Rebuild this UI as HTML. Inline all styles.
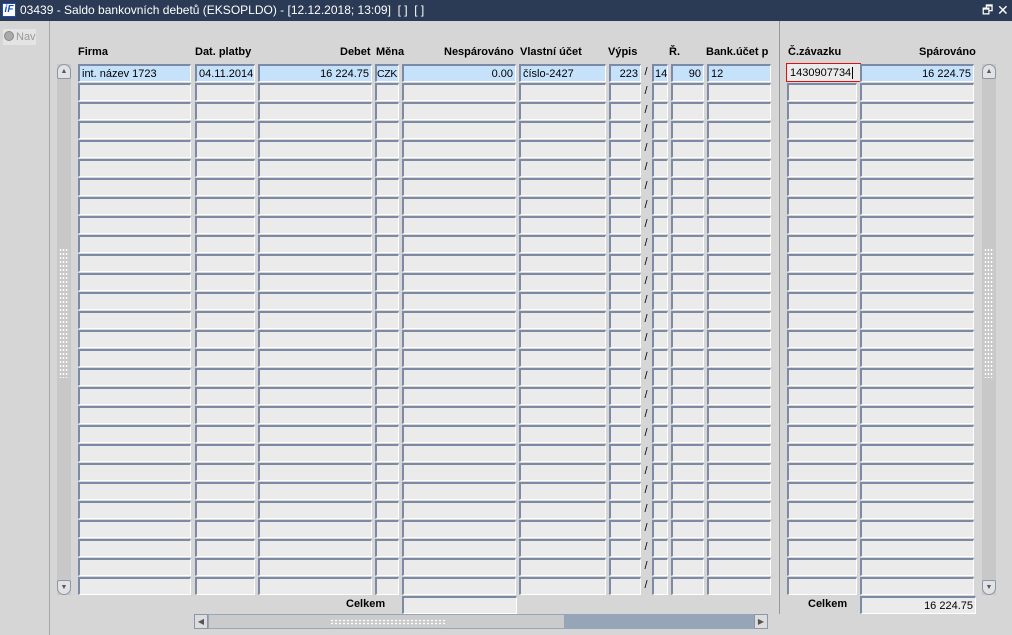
<!DOCTYPE html>
<html><head><meta charset="utf-8"><style>
body{margin:0;width:1012px;height:635px;background:#d6d6d6;font-family:"Liberation Sans",Arial,sans-serif;font-size:11px;position:relative;overflow:hidden}
.t{position:absolute;left:0;top:0;width:1012px;height:21px;background:#2b3a55;color:#fff;font-size:12px;line-height:21px}
.a{position:absolute}
.f{position:absolute;height:15px;background:#ebebeb;border-top:2px solid #7c8aa5;border-left:2px solid #7c8aa5;border-right:1px solid #fff;border-bottom:1px solid #fff;box-sizing:content-box;line-height:16px;white-space:nowrap;overflow:hidden;color:#000}
.s{background:#c6e2fb}
.r{text-align:right;padding-right:2px}
.h{position:absolute;top:46px;font-weight:bold;font-size:11px}
.sl{position:absolute;width:8px;text-align:center;font-size:11px}
</style></head><body>
<div class="t"><span style="position:absolute;left:2px;top:3px;width:14px;height:14px;background:#fff;border:1px solid #1a4cc0;box-sizing:border-box;color:#1a4cc0;font-weight:bold;font-style:italic;font-size:10px;line-height:12px;text-align:center">iF</span><span style="position:absolute;left:20px">03439 - Saldo bankovních debetů (EKSOPLDO) - [12.12.2018; 13:09]&nbsp; [ ]&nbsp; [ ]</span><span style="position:absolute;left:982px;font-size:12px">🗗</span><span style="position:absolute;left:997px;font-size:14px">✕</span></div>
<div class="a" style="left:49px;top:21px;width:1px;height:614px;background:#a8a8a8"></div>
<div class="a" style="left:3px;top:29px;width:33px;height:16px;background:#e4e4e4;color:#999;font-size:11px;line-height:16px"><span style="display:inline-block;width:8px;height:8px;border-radius:50%;background:#aaa;border:1px solid #888;vertical-align:-1px;margin:0 2px 0 1px"></span>Nav</div>
<div class="a" style="left:779px;top:21px;width:1px;height:593px;background:#999"></div>
<div class="h" style="left:78px">Firma</div>
<div class="h" style="left:195px">Dat. platby</div>
<div class="h" style="left:340px">Debet</div>
<div class="h" style="left:376px">Měna</div>
<div class="h" style="left:444px">Nespárováno</div>
<div class="h" style="left:520px">Vlastní účet</div>
<div class="h" style="left:608px">Výpis</div>
<div class="h" style="left:669px">Ř.</div>
<div class="h" style="left:706px">Bank.účet p</div>
<div class="h" style="left:788px">Č.závazku</div>
<div class="h" style="left:919px">Spárováno</div>
<div id="g"></div>
<div class="a" style="left:346px;top:598px;font-weight:bold">Celkem</div>
<div class="f" style="left:402px;top:596px;width:112px"></div>
<div class="a" style="left:808px;top:598px;font-weight:bold">Celkem</div>
<div class="f r" style="left:860px;top:596px;width:111px">16 224.75</div>
<div class="a" style="left:194px;top:614px;width:574px;height:15px;background:#97a5b8"></div>
<div class="a" style="left:209px;top:615px;width:355px;height:13px;background:#cbcbcb"></div>
<div class="a" style="left:330px;top:619px;width:116px;height:6px;background-image:radial-gradient(#fff 35%,transparent 40%);background-size:4px 3px"></div>
<div class="a" style="left:194px;top:614px;width:14px;height:15px;background:#ddd;border:1px solid #8a97ab;box-sizing:border-box;font-size:8px;line-height:13px;text-align:center;color:#555">◀</div>
<div class="a" style="left:754px;top:614px;width:14px;height:15px;background:#ddd;border:1px solid #8a97ab;box-sizing:border-box;font-size:8px;line-height:13px;text-align:center;color:#555">▶</div>
<script>
var cols=[[78,110],[195,57],[258,111],[375,21],[402,111],[519,84],[609,29],[652,13],[671,30],[707,61],[787,67],[860,111]];
var h='';
for(var i=0;i<28;i++){var y=64+i*19;
 for(var c=0;c<cols.length;c++){h+='<div class="f'+(i==0&&c!=10?' s':'')+'" style="left:'+cols[c][0]+'px;top:'+y+'px;width:'+cols[c][1]+'px"></div>';}
 h+='<div class="sl" style="left:642px;top:'+(y+2)+'px">/</div>';}
document.getElementById('g').innerHTML=h;
</script>
<div class="f s" style="left:78px;top:64px;padding-left:2px;width:108px">int. název 1723</div>
<div class="f s" style="left:195px;top:64px;width:55px;padding-left:2px">04.11.2014</div>
<div class="f s r" style="left:258px;top:64px;width:109px">16 224.75</div>
<div class="f s" style="left:375px;top:64px;width:21px;font-size:10.5px;letter-spacing:-0.3px">CZK</div>
<div class="f s r" style="left:402px;top:64px;width:109px">0.00</div>
<div class="f s" style="left:519px;top:64px;width:82px;padding-left:2px">číslo-2427</div>
<div class="f s r" style="left:609px;top:64px;width:27px">223</div>
<div class="f s" style="left:652px;top:64px;width:12px;padding-left:1px">14</div>
<div class="f s r" style="left:671px;top:64px;width:28px">90</div>
<div class="f s" style="left:707px;top:64px;width:59px;padding-left:2px">12</div>
<div class="a" style="left:786px;top:63px;width:70px;height:17px;border:1px solid #e01010;background:#ebebeb;line-height:18px;padding-left:3px;box-sizing:content-box">1430907734<span style="border-left:1px solid #000;margin-left:1px"></span></div>
<div class="f s r" style="left:860px;top:64px;width:109px">16 224.75</div>
<div class="a" style="left:57px;top:64px;width:14px;height:531px;background:#c8c8c8"></div>
<div class="a" style="left:57px;top:64px;width:14px;height:15px;background:#e2e2e2;border:1px solid #8a97ab;border-radius:7px 7px 2px 2px;box-sizing:border-box;font-size:7px;text-align:center;line-height:13px;color:#556">▲</div>
<div class="a" style="left:57px;top:580px;width:14px;height:15px;background:#e2e2e2;border:1px solid #8a97ab;border-radius:2px 2px 7px 7px;box-sizing:border-box;font-size:7px;text-align:center;line-height:13px;color:#556">▼</div>
<div class="a" style="left:59px;top:248px;width:10px;height:130px;background-image:radial-gradient(#fff 35%,transparent 40%);background-size:3px 4px"></div>
<div class="a" style="left:982px;top:64px;width:14px;height:531px;background:#c8c8c8"></div>
<div class="a" style="left:982px;top:64px;width:14px;height:15px;background:#e2e2e2;border:1px solid #8a97ab;border-radius:7px 7px 2px 2px;box-sizing:border-box;font-size:7px;text-align:center;line-height:13px;color:#556">▲</div>
<div class="a" style="left:982px;top:580px;width:14px;height:15px;background:#e2e2e2;border:1px solid #8a97ab;border-radius:2px 2px 7px 7px;box-sizing:border-box;font-size:7px;text-align:center;line-height:13px;color:#556">▼</div>
<div class="a" style="left:984px;top:248px;width:10px;height:130px;background-image:radial-gradient(#fff 35%,transparent 40%);background-size:3px 4px"></div>
</body></html>
